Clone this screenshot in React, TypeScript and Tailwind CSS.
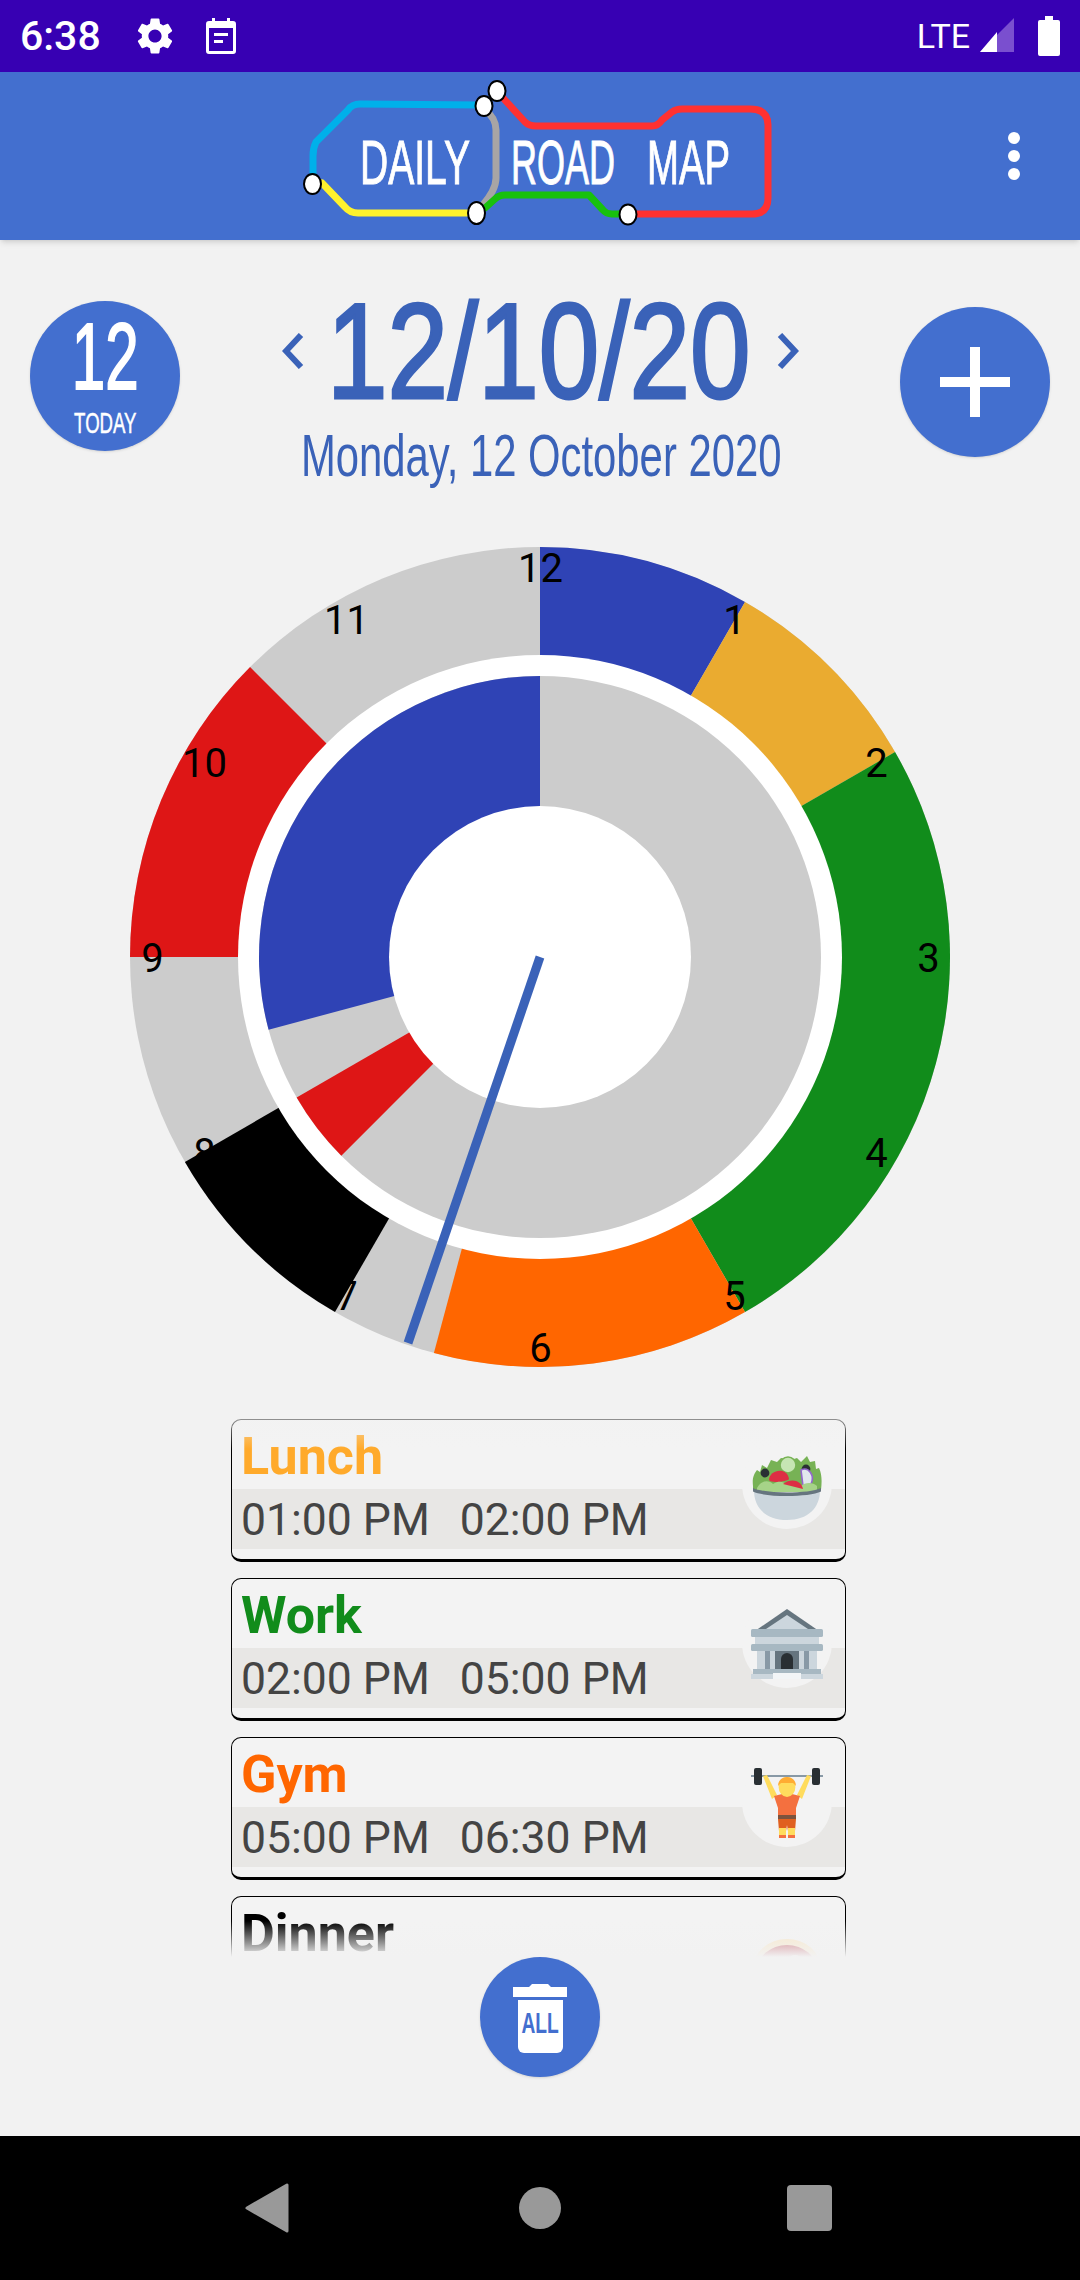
import React from 'react';
import { MdSettings } from 'react-icons/md';

const CX = 410;
const CY = 410;

const polar = (r: number, deg: number): [number, number] => {
  const rad = (deg * Math.PI) / 180;
  return [CX + r * Math.sin(rad), CY - r * Math.cos(rad)];
};

const sector = (r: number, from: number, to: number) => {
  const [x0, y0] = polar(r, from);
  const [x1, y1] = polar(r, to);
  const large = to - from > 180 ? 1 : 0;
  return `M${CX} ${CY} L${x0} ${y0} A${r} ${r} 0 ${large} 1 ${x1} ${y1} Z`;
};

const outerSegments = [
  { from: 0, to: 30, color: '#2f43b5' },
  { from: 30, to: 60, color: '#eaab30' },
  { from: 60, to: 150, color: '#118c1b' },
  { from: 150, to: 195, color: '#ff6600' },
  { from: 210, to: 240, color: '#000000' },
  { from: 270, to: 315, color: '#de1616' },
];

const innerSegments = [
  { from: 225, to: 240, color: '#de1616' },
  { from: 255, to: 360, color: '#2f43b5' },
];

const Clock = () => (
  <svg width="820" height="820" viewBox="0 0 820 820" className="block mx-auto">
    <circle cx={CX} cy={CY} r="410" fill="#cccccc" />
    {outerSegments.map((s) => (
      <path key={s.from} d={sector(410, s.from, s.to)} fill={s.color} />
    ))}
    {Array.from({ length: 12 }, (_, i) => {
      const hour = i + 1;
      const [x] = polar(388, hour * 30);
      const [, y] = polar(390, hour * 30);
      return (
        <text
          key={hour}
          x={x + 0.5}
          y={y + 15}
          textAnchor="middle"
          fontSize="40"
          fontFamily="Roboto, sans-serif"
          fill="#000"
        >
          {hour}
        </text>
      );
    })}
    <circle cx={CX} cy={CY} r="302" fill="#fff" />
    <circle cx={CX} cy={CY} r="281" fill="#cccccc" />
    {innerSegments.map((s) => (
      <path key={s.from} d={sector(281, s.from, s.to)} fill={s.color} />
    ))}
    <circle cx={CX} cy={CY} r="151" fill="#fff" />
    <line x1={CX} y1={CY} x2={CX - 132} y2={CY + 386} stroke="#3a62b8" strokeWidth="9" />
  </svg>
);

const Logo = () => (
  <svg width="480" height="168" viewBox="300 72 480 168" fill="none">
    <g strokeWidth="7" strokeLinejoin="round" strokeLinecap="round">
      <path d="M313 177V156Q313 148 316 142L348 110Q352 104 360 104L482 105" stroke="#00b0ea" />
      <path d="M322 183L345 207Q350 213 358 213H475" stroke="#fff22d" />
      <path d="M485 110Q496 118 496 130V178Q496 190 482 206" stroke="#a8a5a5" />
      <path d="M485 208L495 199Q499 195 505 195H589L603 210Q606 214 612 214H628" stroke="#18c10d" />
      <path d="M503 98L525 122Q529 126 536 126H652Q658 126 662 120L672 112Q676 109 682 109H750Q768 109 768 125V198Q768 214 752 214H628" stroke="#ff3131" />
    </g>
    <g fill="#fff" stroke="#000" strokeWidth="2">
      <ellipse cx="312.5" cy="184" rx="8.5" ry="10" />
      <ellipse cx="484" cy="106" rx="8.5" ry="10" />
      <ellipse cx="497" cy="91" rx="8.5" ry="10" />
      <ellipse cx="476.5" cy="213" rx="8.5" ry="11" />
      <ellipse cx="628" cy="214.5" rx="8.5" ry="10" />
    </g>
    <g fill="#fff" stroke="#fff" strokeWidth="1" fontFamily="'Liberation Sans', sans-serif" fontSize="63">
      <text x="360" y="184" textLength="110" lengthAdjust="spacingAndGlyphs">DAILY</text>
      <text x="511" y="184" textLength="104" lengthAdjust="spacingAndGlyphs">ROAD</text>
      <text x="647" y="184" textLength="83" lengthAdjust="spacingAndGlyphs">MAP</text>
    </g>
  </svg>
);

const Salad = () => (
  <svg viewBox="0 0 36 36" className="w-[72px] h-[72px]">
    <path d="M1 19c-.500-4 .500-6 2-8l1.500 1 1-3.500 2.500 1.500L10 6l3 1 2-2 5 1 3-1 2 2 3-3 1.500 3 2.500-.5.500 4 1.500-.5c1.500 3 1.500 7 1 11H1z" fill="#77b255" />
    <circle cx="7" cy="12.500" r="2.200" fill="#292f33" />
    <circle cx="27.500" cy="10.500" r="2.200" fill="#292f33" />
    <circle cx="18.500" cy="8.500" r="4" fill="#c6e5b3" stroke="#77b255" strokeWidth="0.800" />
    <path d="M9 16c0-5 9-7 10-.500 0 1-9 2.500-10 .500z" fill="#dd2e44" />
    <path d="M25 11c4-2 7 3 5 7l-4 1z" fill="#e1e8ed" stroke="#9266cc" strokeWidth="0.800" />
    <path d="M3 20c2-4 6-4 8-2 3-2 5-1 7 0 3-2 6-1 7 1 2-2 6-2 8 0v3H3z" fill="#a6d388" />
    <path d="M16 18c4-3 9-2 10 2.500z" fill="#dd2e44" />
    <path d="M1.500 21c6 3 27 3 33 0 0 9-6 15-16.500 15S1.500 30 1.500 21z" fill="#ccd6dd" />
    <path d="M1 20c6 3 28 3 34 0v1.800c-6 3-28 3-34 0z" fill="#66757f" />
  </svg>
);

const Bank = () => (
  <svg viewBox="0 0 36 36" className="w-[72px] h-[72px]">
    <path d="M18 1L2 12h32z" fill="#66757f" />
    <path d="M18 4L6 12h24z" fill="#ccd6dd" />
    <rect x="0" y="11" width="36" height="4" rx="0.800" fill="#a7b8c2" />
    <rect x="2" y="15" width="32" height="4" fill="#ccd6dd" />
    <rect x="0" y="18.500" width="36" height="3.500" rx="0.800" fill="#a7b8c2" />
    <rect x="3" y="22" width="30" height="10" fill="#ccd6dd" />
    <rect x="7" y="22" width="2.500" height="10" fill="#8899a6" />
    <rect x="26.500" y="22" width="2.500" height="10" fill="#8899a6" />
    <rect x="12" y="22" width="12" height="10" fill="#66757f" />
    <path d="M15 32v-6a3 3 0 0 1 6 0v6z" fill="#292f33" />
    <rect x="1" y="31" width="34" height="2.500" fill="#a7b8c2" />
    <rect x="0" y="33.500" width="11" height="2.500" fill="#ccd6dd" />
    <rect x="11" y="33" width="14" height="3" fill="#f2f5f7" />
    <rect x="25" y="33.500" width="11" height="2.500" fill="#ccd6dd" />
  </svg>
);

const Lifter = () => (
  <svg viewBox="0 0 36 36" className="w-[72px] h-[72px]">
    <rect x="0" y="4.500" width="36" height="1" fill="#8899a6" />
    <rect x="1.500" y="1" width="4" height="8.500" rx="1" fill="#292f33" />
    <rect x="30.500" y="1" width="4" height="8.500" rx="1" fill="#292f33" />
    <path d="M6 5l2-.500 5 10-2.500 2zM30 5l-2-.500-5 10 2.500 2z" fill="#ffdc5d" />
    <path d="M11.500 15l4-1h5l4 1-2 6v5h-9v-5z" fill="#f4703f" />
    <rect x="13.500" y="24.500" width="9" height="2" fill="#7c533e" />
    <path d="M13.500 26.500h9l-.500 6h-3.500l-.500-3-.500 3H14z" fill="#e0601f" />
    <rect x="14" y="31" width="3.500" height="3.500" fill="#ffdc5d" />
    <rect x="18.500" y="31" width="3.500" height="3.500" fill="#ffdc5d" />
    <path d="M14 34.500h3.500V36H14zM18.500 34.500H22V36h-3.500z" fill="#f4703f" />
    <ellipse cx="18" cy="10.500" rx="4.200" ry="5" fill="#ffdc5d" />
    <path d="M13.500 10c0-6 9-6 9 0l-1.500-1.500h-6z" fill="#ffac33" />
  </svg>
);

const Steak = () => (
  <svg viewBox="0 0 36 36" className="w-[72px] h-[72px]">
    <ellipse cx="18" cy="22" rx="17" ry="15" fill="#f9e5c0" />
    <ellipse cx="18" cy="23" rx="15" ry="13" fill="#c1505a" />
    <circle cx="22" cy="19" r="4" fill="#f5e4d8" />
  </svg>
);

const events = [
  { title: 'Lunch', color: 'text-[#ffaa2b]', start: '01:00 PM', end: '02:00 PM', Icon: Salad },
  { title: 'Work', color: 'text-[#118c1b]', start: '02:00 PM', end: '05:00 PM', Icon: Bank },
  { title: 'Gym', color: 'text-[#ff6600]', start: '05:00 PM', end: '06:30 PM', Icon: Lifter },
  { title: 'Dinner', color: 'text-black', start: '06:30 PM', end: '07:00 PM', Icon: Steak },
];

const App = () => {
  return (
    <div className="w-[1080px] h-[2280px] flex flex-col overflow-hidden bg-[#f2f2f2] font-['Roboto',sans-serif]">
      {/* status bar */}
      <div className="h-[72px] shrink-0 bg-[#3700b3] flex items-center pl-[20px] pr-[20px] text-white">
        <span className="w-[80px] text-[41px] leading-none font-medium">6:38</span>
        <MdSettings className="ml-[33px] w-[44px] h-[44px]" />
        <svg width="30" height="36" viewBox="0 0 30 36" className="ml-[29px]">
          <path d="M6 0h3v3h12V0h3v3h3a3 3 0 0 1 3 3v27a3 3 0 0 1-3 3H3a3 3 0 0 1-3-3V6a3 3 0 0 1 3-3h3z" fill="#fff" />
          <rect x="3" y="10" width="24" height="23" fill="#3700b3" />
          <rect x="8" y="15" width="14" height="3" fill="#fff" />
          <rect x="8" y="22" width="9" height="3" fill="#fff" />
        </svg>
        <span className="ml-auto text-[34px] leading-none">LTE</span>
        <svg width="34" height="36" viewBox="0 0 34 36" className="ml-[10px]">
          <polygon points="0,34 34,0 34,34" fill="#7a4fcf" />
          <polygon points="0,34 17,14 17,34" fill="#fff" />
        </svg>
        <svg width="22" height="40" viewBox="0 0 22 40" className="ml-[24px]">
          <path d="M7 0h8v4h5a2 2 0 0 1 2 2v32a2 2 0 0 1-2 2H2a2 2 0 0 1-2-2V6a2 2 0 0 1 2-2h5z" fill="#fff" />
        </svg>
      </div>

      {/* app bar */}
      <div className="h-[168px] shrink-0 bg-[#436fcf] shadow-md grid grid-cols-[300px_480px_300px] items-center relative z-10">
        <div />
        <Logo />
        <div className="flex flex-col items-end gap-[6px] pr-[60px]">
          <div className="w-[12px] h-[12px] rounded-full bg-white" />
          <div className="w-[12px] h-[12px] rounded-full bg-white" />
          <div className="w-[12px] h-[12px] rounded-full bg-white" />
        </div>
      </div>

      {/* date row */}
      <div className="h-[307px] shrink-0 flex justify-between px-[30px] items-start">
        <div className="mt-[61px] w-[150px] h-[150px] rounded-full bg-[#436fcf] shadow-sm text-white flex flex-col items-center font-['Liberation_Sans',sans-serif]">
          <span className="mt-[10px] text-[94px] leading-[92px] scale-x-[0.64] [-webkit-text-stroke:2px_#ffffff]">12</span>
          <span className="mt-[5px] text-[30px] leading-[30px] scale-x-[0.62] [-webkit-text-stroke:0.5px_#ffffff]">TODAY</span>
        </div>
        <div className="flex flex-col items-center mt-[43px] font-['Liberation_Sans',sans-serif] text-[#3a62b8]">
          <div className="flex items-center">
            <svg width="22" height="36" viewBox="0 0 22 36" fill="none" stroke="#3a62b8" strokeWidth="6" className="mr-[23px]">
              <path d="M19 2L4 18l15 16" />
            </svg>
            <span className="w-[423px] origin-left scale-x-[0.8] whitespace-nowrap text-[136px] leading-[136px] [-webkit-text-stroke:3px_#3a62b8]">12/10/20</span>
            <svg width="22" height="36" viewBox="0 0 22 36" fill="none" stroke="#3a62b8" strokeWidth="6" className="ml-[27px]">
              <path d="M3 2l15 16L3 34" />
            </svg>
          </div>
          <span className="w-[479px] origin-left scale-x-[0.697] text-[60px] leading-[70px] mt-[2px] whitespace-nowrap">Monday, 12 October 2020</span>
        </div>
        <div className="mt-[67px] w-[150px] h-[150px] rounded-full bg-[#436fcf] shadow-sm flex items-center justify-center">
          <svg width="70" height="70" viewBox="0 0 70 70" fill="#fff">
            <rect x="30" y="0" width="10" height="70" />
            <rect x="0" y="30" width="70" height="10" />
          </svg>
        </div>
      </div>

      {/* clock */}
      <Clock />

      {/* event list */}
      <div className="relative mt-[52px] ml-[231px] w-[615px] h-[538px] shrink-0 overflow-hidden">
        <div className="flex flex-col gap-[16px]">
          {events.map(({ title, color, start, end, Icon }) => (
            <div
              key={title}
              className="relative h-[143px] shrink-0 rounded-[10px] border border-black border-b-[3px] bg-[#f3f3f3]"
            >
              <div className={`h-[69px] pl-[9px] pt-[7px] text-[52px] leading-[60px] font-bold ${color}`}>{title}</div>
              <div className="h-[60px] bg-[#e8e7e5] pl-[9px] pt-[3px] flex items-center gap-[30px] text-[44.5px] leading-none text-[#444444]">
                <span>{start}</span>
                <span>{end}</span>
              </div>
              <div className="absolute top-[19px] right-[13px] w-[90px] h-[90px] rounded-full bg-[#f3f3f3] flex items-center justify-center">
                <Icon />
              </div>
            </div>
          ))}
        </div>
        <div className="absolute top-0 left-0 right-0 h-[30px] bg-gradient-to-b from-[#f2f2f2]/60 to-transparent" />
        <div className="absolute bottom-0 left-0 right-0 h-[36px] bg-gradient-to-b from-transparent to-[#f2f2f2]" />
      </div>

      {/* delete all */}
      <div className="flex justify-center shrink-0">
        <div className="w-[120px] h-[120px] rounded-full bg-[#436fcf] shadow-sm flex flex-col items-center pt-[26px]">
          <svg width="54" height="14" viewBox="0 0 54 14" fill="#fff" className="block">
            <path d="M0 4h16l3-3h16l3 3h16v10H0z" />
          </svg>
          <div className="mt-[3px] w-[45px] h-[53px] bg-white rounded-b-[6px] flex justify-center pt-[8px] text-[#436fcf] font-['Liberation_Sans',sans-serif] font-bold text-[30px] leading-[30px]">
            <span className="scale-x-[0.64]">ALL</span>
          </div>
        </div>
      </div>

      {/* nav bar */}
      <div className="mt-auto h-[144px] shrink-0 bg-black flex items-center">
        <svg width="44" height="50" viewBox="0 0 44 50" className="ml-[245px]">
          <path d="M42 2v46L2 25z" fill="#999999" stroke="#999999" strokeWidth="3" strokeLinejoin="round" />
        </svg>
        <div className="ml-[230px] w-[42px] h-[42px] rounded-full bg-[#999999]" />
        <div className="ml-[226px] w-[45px] h-[46px] rounded-[4px] bg-[#999999]" />
      </div>
    </div>
  );
};

export default App;
